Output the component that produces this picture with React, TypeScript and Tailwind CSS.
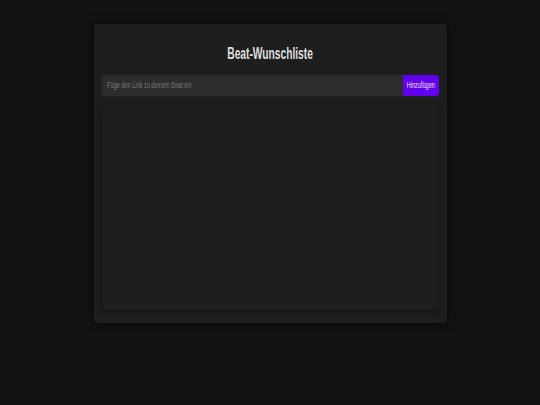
import { useState } from 'react';

export default function App() {
  const [link, setLink] = useState('');
  const [beats, setBeats] = useState<string[]>([]);

  const addBeat = () => {
    if (!link.trim()) return;
    setBeats([...beats, link.trim()]);
    setLink('');
  };

  return (
    <div className="min-h-[405px] bg-[#121212] pt-[24px] font-['Liberation_Sans',Arial,sans-serif]">
      <div className="mx-auto flex h-[299px] w-[353px] flex-col rounded-[4px] bg-[#1e1e1e] px-[8px] pb-[13px] pt-[19px] shadow-[0_0_10px_rgba(0,0,0,0.5)]">
        {/* Titel */}
        <h1 className="flex h-[20px] items-center justify-center text-[16.5px] font-bold text-[#dedede]">
          <span className="inline-block scale-x-[0.62]">Beat-Wunschliste</span>
        </h1>

        {/* Eingabe */}
        <div className="mt-[12px] flex h-[21px]">
          <div className="relative flex-1">
            <input
              value={link}
              onChange={(e) => setLink(e.target.value)}
              className="block h-full w-full rounded-l-[3px] bg-[#2c2c2c] px-[5px] text-[9px] text-[#e0e0e0] outline-none"
            />
            {!link && (
              <span className="pointer-events-none absolute left-[5px] top-0 flex h-full origin-left scale-x-[0.62] items-center whitespace-nowrap text-[9px] text-[#7a7a7a]">
                Füge den Link zu deinem Beat ein
              </span>
            )}
          </div>
          <button
            onClick={addBeat}
            className="flex w-[36px] items-center justify-center rounded-r-[3px] bg-[#6200ee] text-[9px] text-[#f0e8ff]"
          >
            <span className="inline-block scale-x-[0.62] whitespace-nowrap">Hinzufügen</span>
          </button>
        </div>

        {/* Liste */}
        <div className="mt-[8px] flex-1 rounded-[4px] bg-[#1e1e1e] shadow-[0_2px_5px_rgba(0,0,0,0.4)]">
          {beats.map((b, i) => (
            <div key={i} className="border-b border-[#2a2a2a] px-[6px] py-[4px] text-[9px] text-[#e0e0e0]">
              {b}
            </div>
          ))}
        </div>
      </div>
    </div>
  );
}
